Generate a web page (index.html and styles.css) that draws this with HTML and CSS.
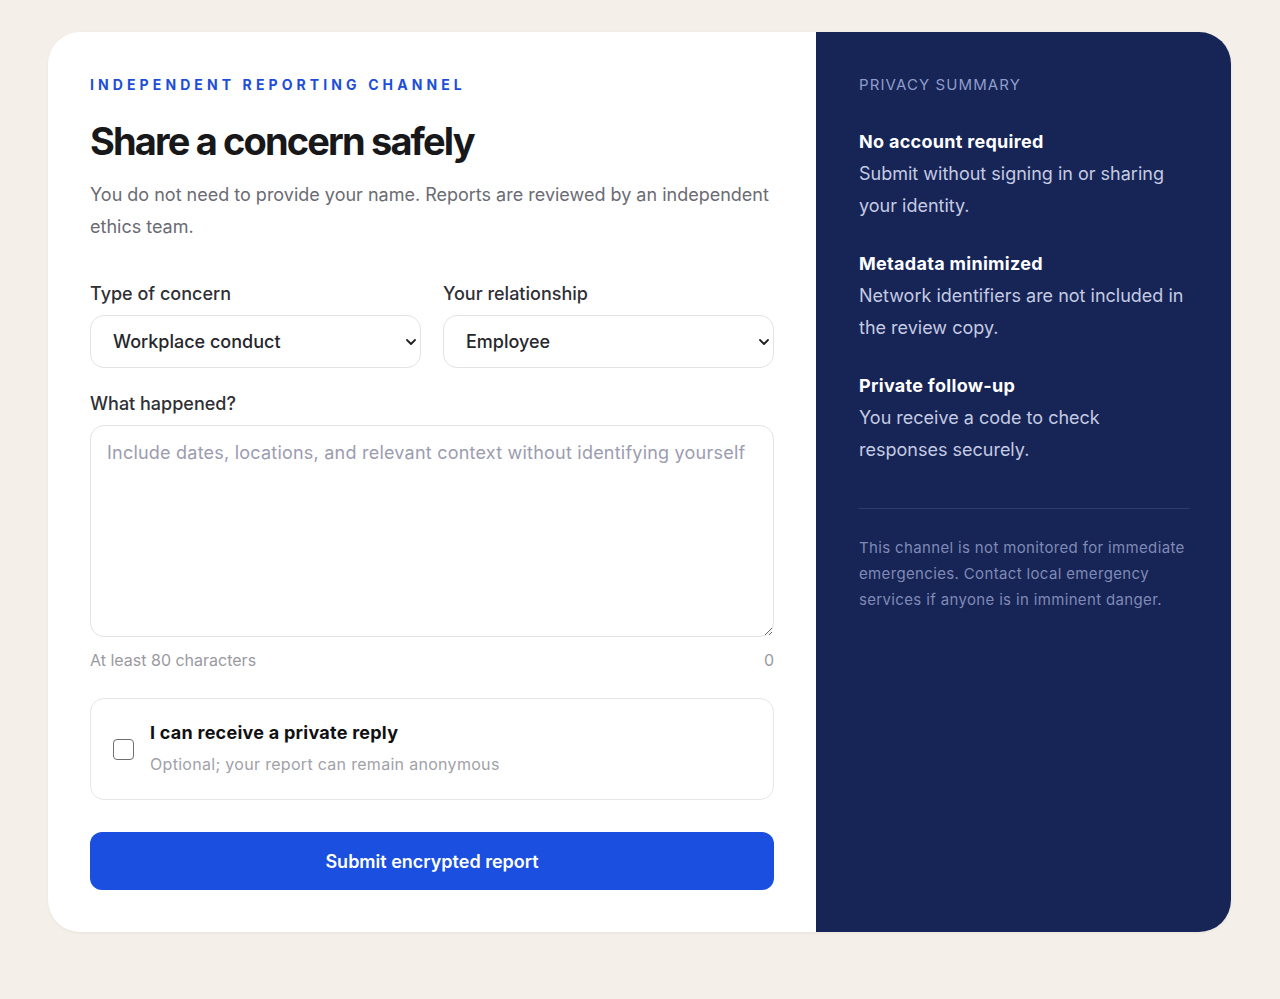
FILE: index.html
```html
<!DOCTYPE html>
<html lang="en">
<head>
<meta charset="utf-8">
<title>Share a concern safely</title>
<link rel="stylesheet" href="styles.css">
</head>
<body>
<main class="card">
  <section class="form-panel">
    <p class="eyebrow">Independent reporting channel</p>
    <h1 class="title">Share a concern safely</h1>
    <p class="intro">You do not need to provide your name. Reports are reviewed by an independent ethics team.</p>

    <div class="row">
      <div class="field">
        <label class="label" for="type">Type of concern</label>
        <div class="select-wrap">
          <select id="type" class="select"><option>Workplace conduct</option></select>
          <svg class="chev" viewBox="0 0 10 6" width="10" height="6"><path d="M1 1l4 4 4-4" fill="none" stroke="#222" stroke-width="1.8" stroke-linecap="round" stroke-linejoin="round"/></svg>
        </div>
      </div>
      <div class="field">
        <label class="label" for="rel">Your relationship</label>
        <div class="select-wrap">
          <select id="rel" class="select"><option>Employee</option></select>
          <svg class="chev" viewBox="0 0 10 6" width="10" height="6"><path d="M1 1l4 4 4-4" fill="none" stroke="#222" stroke-width="1.8" stroke-linecap="round" stroke-linejoin="round"/></svg>
        </div>
      </div>
    </div>

    <label class="label label-what" for="what">What happened?</label>
    <textarea id="what" class="textarea" placeholder="Include dates, locations, and relevant context without identifying yourself"></textarea>
    <div class="hint-row">
      <span>At least 80 characters</span>
      <span>0</span>
    </div>

    <label class="check-card">
      <span class="box"></span>
      <span class="check-text">
        <span class="check-title">I can receive a private reply</span>
        <span class="check-sub">Optional; your report can remain anonymous</span>
      </span>
    </label>

    <button class="submit" type="button">Submit encrypted report</button>
  </section>

  <aside class="side">
    <p class="side-eyebrow">Privacy summary</p>
    <div class="item">
      <h2 class="item-title">No account required</h2>
      <p class="item-text">Submit without signing in or sharing your identity.</p>
    </div>
    <div class="item">
      <h2 class="item-title">Metadata minimized</h2>
      <p class="item-text">Network identifiers are not included in the review copy.</p>
    </div>
    <div class="item">
      <h2 class="item-title">Private follow-up</h2>
      <p class="item-text">You receive a code to check responses securely.</p>
    </div>
    <hr class="divider">
    <p class="note">This channel is not monitored for immediate emergencies. Contact local emergency services if anyone is in imminent danger.</p>
  </aside>
</main>
</body>
</html>
```

FILE: styles.css
```css
* { box-sizing: border-box; }
html, body { margin: 0; padding: 0; }
body {
  background: #f4efe9;
  font-family: Inter, "Noto Sans", "Liberation Sans", sans-serif;
  color: #1a1a1f;
  padding: 32px 49px 67px 48px;
}
.card {
  display: flex;
  width: 1183px;
  height: 900px;
  background: #ffffff;
  border-radius: 32px;
  overflow: hidden;
  box-shadow: 0 1px 3px rgba(60, 40, 20, 0.06);
}
.form-panel {
  width: 768px;
  flex: none;
  padding: 42px;
  display: flex;
  flex-direction: column;
}
.eyebrow {
  margin: 0;
  font-size: 14px;
  line-height: 22px;
  font-weight: 700;
  letter-spacing: 4.1px;
  text-transform: uppercase;
  color: #1d4ed8;
}
.title {
  margin: 21px 0 0;
  font-size: 38px;
  line-height: 48px;
  font-weight: 700;
  letter-spacing: -1.85px;
  color: #18181b;
}
.intro {
  margin: 14px 0 0;
  font-size: 18px;
  line-height: 32px;
  color: #6b6b73;
}
.row {
  display: flex;
  gap: 22px;
  margin-top: 38px;
}
.field { flex: 1; display: flex; flex-direction: column; }
.label {
  display: block;
  font-size: 18px;
  line-height: 26px;
  font-weight: 500;
  color: #2f2f35;
  margin-bottom: 8px;
}
.select-wrap { position: relative; }
.select {
  appearance: none;
  -webkit-appearance: none;
  width: 100%;
  height: 53px;
  border: 1px solid #e3e3e6;
  border-radius: 14px;
  background: #fff;
  padding: 0 40px 0 22px;
  font-family: inherit;
  font-size: 18px;
  font-weight: 500;
  color: #26262b;
}
.chev {
  position: absolute;
  top: 24px;
  right: 5px;
}
.label-what { margin-top: 23px; }
.textarea {
  display: block;
  width: 100%;
  height: 212px;
  border: 1px solid #e3e3e6;
  border-radius: 14px;
  padding: 14px 16px;
  font-family: inherit;
  font-size: 18px;
  line-height: 26px;
  letter-spacing: 0.22px;
  color: #26262b;
  resize: vertical;
}
.textarea::placeholder { color: #9c9cb0; }
.hint-row {
  display: flex;
  justify-content: space-between;
  margin-top: 12px;
  font-size: 16px;
  line-height: 22px;
  color: #9a9aa0;
}
.check-card {
  margin-top: 27px;
  height: 102px;
  border: 1px solid #e6e6e9;
  border-radius: 14px;
  display: flex;
  align-items: center;
  padding: 0 22px 4px;
  gap: 16px;
}
.box {
  width: 21px;
  height: 21px;
  border: 1.5px solid #6e6e74;
  border-radius: 4px;
  flex: none;
  margin-top: 4px;
}
.check-text { display: flex; flex-direction: column; }
.check-title {
  font-size: 18px;
  line-height: 26px;
  font-weight: 700;
  letter-spacing: 0.25px;
  color: #111114;
}
.check-sub {
  margin-top: 7px;
  font-size: 16px;
  line-height: 22px;
  letter-spacing: 0.3px;
  color: #a1a1a8;
}
.submit {
  margin-top: 32px;
  height: 58px;
  width: 100%;
  border: 0;
  border-radius: 12px;
  background: #1a4fdf;
  color: #fff;
  font-family: inherit;
  font-size: 18px;
  font-weight: 600;
}
.side {
  flex: 1;
  background: #172456;
  padding: 42px 42px 42px 43px;
}
.side-eyebrow {
  margin: 0;
  font-size: 15px;
  line-height: 22px;
  letter-spacing: 1.1px;
  text-transform: uppercase;
  color: #8e9ccc;
}
.item { margin-top: 26px; }
.item:first-of-type { margin-top: 30px; }
.item-title {
  margin: 0;
  font-size: 18px;
  line-height: 32px;
  font-weight: 700;
  letter-spacing: 0.3px;
  color: #ffffff;
}
.item-text {
  margin: 0;
  font-size: 18px;
  line-height: 32px;
  color: #c4cbe2;
}
.divider {
  margin: 42px 0 0;
  border: 0;
  border-top: 1px solid #2e3d70;
}
.note {
  margin: 26px 0 0;
  font-size: 15px;
  line-height: 26px;
  letter-spacing: 0.35px;
  color: #7f8ab5;
}
```
